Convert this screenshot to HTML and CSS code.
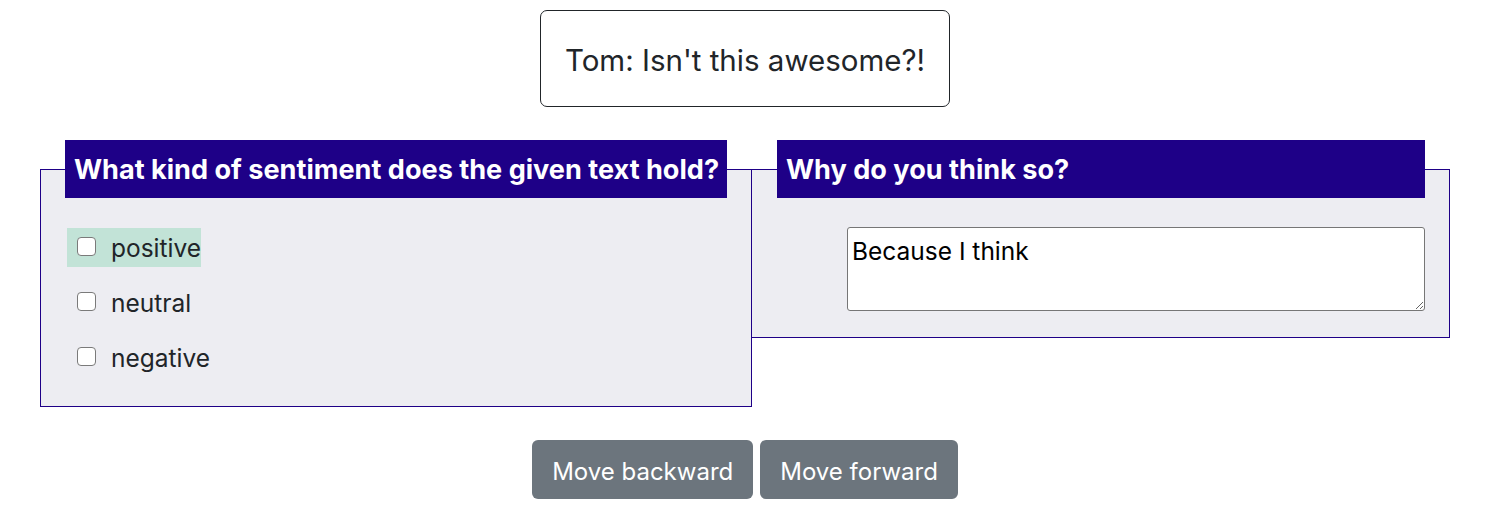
FILE: index.html
```html
<!DOCTYPE html>
<html>
<head>
<meta charset="utf-8">
<link rel="stylesheet" href="styles.css">
</head>
<body>
<div class="page">
  <div class="utterance-row">
    <div class="utterance">Tom: Isn't this awesome?!</div>
  </div>
  <div class="questions">
    <fieldset class="question q-left">
      <legend class="q-title">What kind of sentiment does the given text hold?</legend>
      <div class="options">
        <label class="option selected"><input type="checkbox" class="cb"><span>positive</span></label>
        <label class="option"><input type="checkbox" class="cb"><span>neutral</span></label>
        <label class="option"><input type="checkbox" class="cb"><span>negative</span></label>
      </div>
    </fieldset>
    <fieldset class="question q-right">
      <legend class="q-title">Why do you think so?</legend>
      <div class="answer">
        <textarea class="reason">Because I think</textarea>
      </div>
    </fieldset>
  </div>
  <div class="nav">
    <button class="btn">Move backward</button>
    <button class="btn">Move forward</button>
  </div>
</div>
</body>
</html>
```
FILE: styles.css
```css
html, body {
  margin: 0;
  padding: 0;
  background: #ffffff;
}
body {
  font-family: Inter, "Noto Sans", "Liberation Sans", sans-serif;
  color: #212529;
}
.page {
  width: 1410px;
  margin-left: 40px;
  padding-top: 10px;
}
.utterance-row {
  display: flex;
  justify-content: center;
}
.utterance {
  border: 1px solid #212529;
  border-radius: 7px;
  width: 408px;
  height: 93px;
  box-sizing: content-box;
  display: flex;
  align-items: center;
  justify-content: center;
  padding-top: 2px;
  font-size: 29.5px;
  color: #212529;
}
.questions {
  display: flex;
  align-items: flex-start;
  margin-top: 33px;
}
.question {
  margin: 0;
  border: 1px solid #1e0087;
  background: #ededf2;
  padding: 0 24px 0 24px;
  box-sizing: border-box;
  min-width: 0;
}
.q-left {
  width: 712px;
  padding-bottom: 29px;
}
.q-right {
  width: 698px;
  border-left: none;
  padding-left: 25px;
  padding-bottom: 26px;
}
.q-title {
  box-sizing: border-box;
  width: 100%;
  height: 58px;
  padding: 0 9px;
  background: #1e0087;
  color: #ffffff;
  font-weight: 700;
  font-size: 27.1px;
  display: flex;
  align-items: center;
  white-space: nowrap;
}
.options {
  display: flex;
  flex-direction: column;
  gap: 16px;
  padding-top: 30px;
}
.option {
  display: flex;
  align-items: center;
  gap: 15px;
  height: 39px;
  padding: 0 0 0 10px;
  margin-left: 2px;
  font-size: 24.5px;
  color: #212529;
  align-self: flex-start;
}
.option.selected {
  background: #c2e3d7;
}
.cb {
  appearance: none;
  -webkit-appearance: none;
  margin: 0;
  width: 19px;
  height: 19px;
  border: 1.5px solid #7a7a7a;
  border-radius: 4px;
  background: #ffffff;
  box-sizing: border-box;
  position: relative;
  top: -1px;
}
.answer {
  display: flex;
  justify-content: flex-end;
  padding-top: 29px;
}
.reason {
  width: 578px;
  height: 84px;
  box-sizing: border-box;
  margin: 0;
  border: 1px solid #767676;
  border-radius: 3px;
  padding: 9px 4px;
  font-family: Inter, "Noto Sans", "Liberation Sans", sans-serif;
  font-size: 24.5px;
  line-height: 28px;
  color: #000000;
  background: #ffffff;
  resize: both;
}
.nav {
  display: flex;
  justify-content: center;
  gap: 7px;
  margin-top: 33px;
}
.btn {
  background: #6c757d;
  color: #ffffff;
  border: none;
  border-radius: 6px;
  height: 59px;
  padding: 3px 20px 0 20px;
  font-family: Inter, "Noto Sans", "Liberation Sans", sans-serif;
  font-size: 24px;
}
```
